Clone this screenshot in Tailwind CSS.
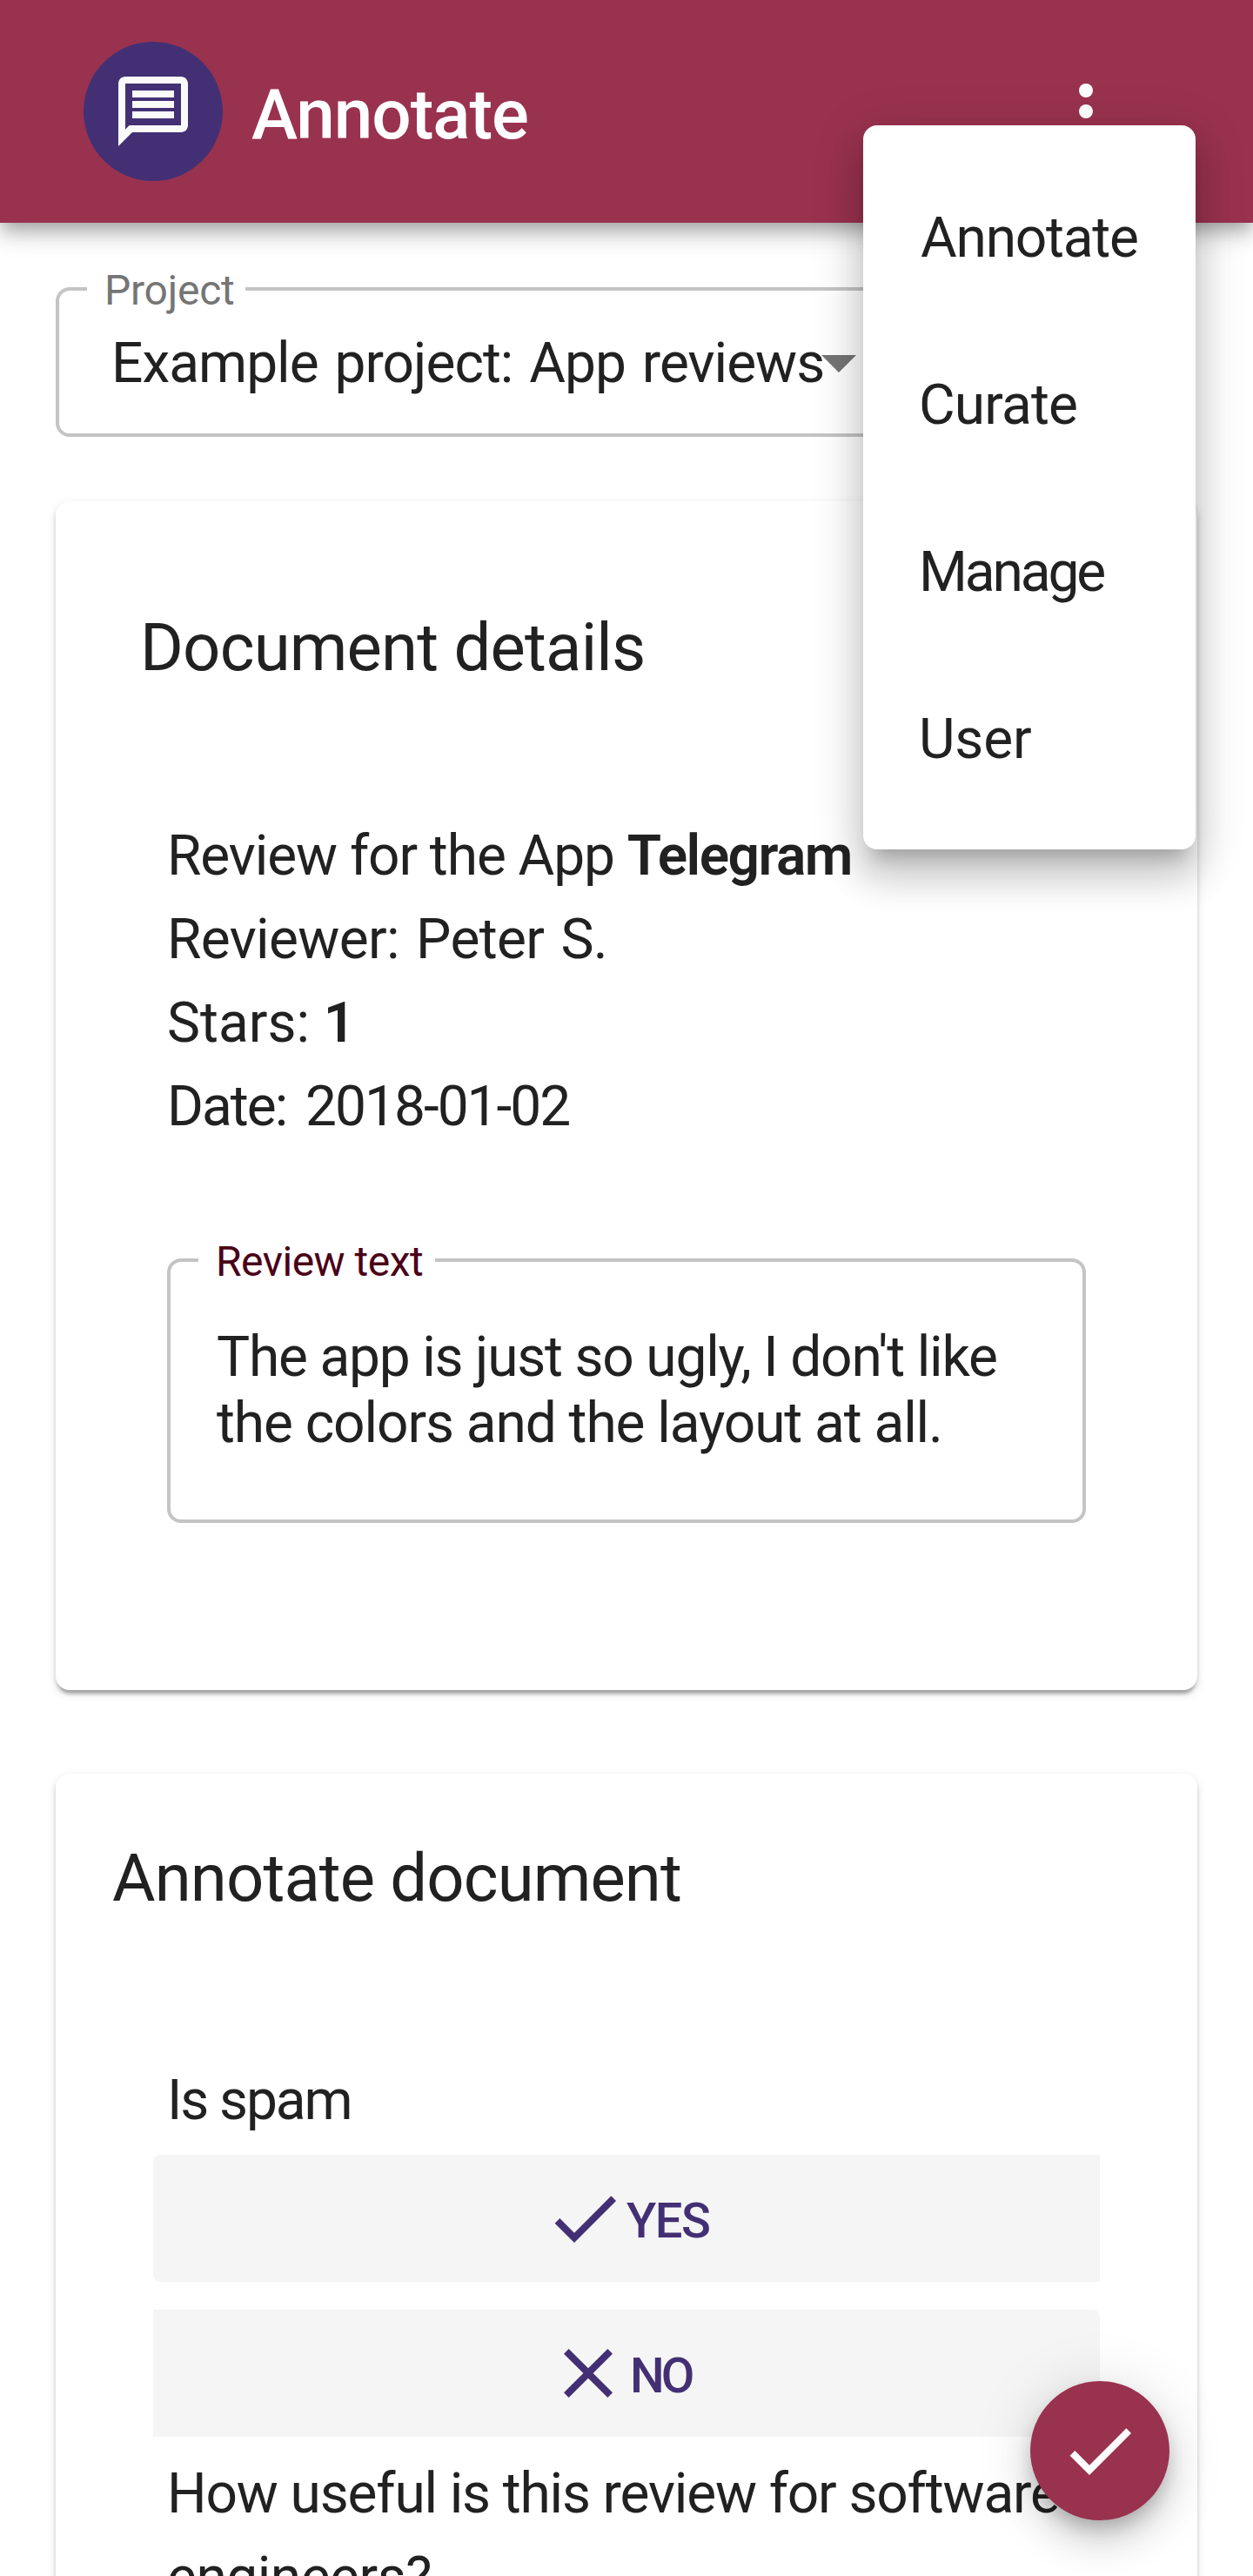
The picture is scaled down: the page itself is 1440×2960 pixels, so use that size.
<!DOCTYPE html>
<html lang="en">
<head>
<meta charset="utf-8">
<title>Annotate</title>
<script src="https://cdn.jsdelivr.net/npm/@tailwindcss/browser@4"></script>
</head>
<body class="bg-white font-[Roboto,sans-serif] text-[#212121]">
<div class="relative h-[2960px] w-[1440px] overflow-hidden text-[64px] leading-[96px]">

  <!-- App bar -->
  <header class="relative z-10 flex h-64 items-center bg-[#99324f] pr-36 pl-24 text-white shadow-[0_8px_16px_-4px_rgba(0,0,0,.2),0_16px_20px_0_rgba(0,0,0,.14),0_4px_40px_0_rgba(0,0,0,.12)]">
    <div class="flex size-40 items-center justify-center rounded-full bg-[#433074]">
      <svg class="size-24 fill-[#fafafa]" viewBox="0 0 24 24"><path d="M4 4h16v12H5.17L4 17.17V4m0-2c-1.1 0-1.99.9-1.99 2L2 22l4-4h14c1.1 0 2-.9 2-2V4c0-1.1-.9-2-2-2H4zm2 10h12v2H6v-2zm0-3h12v2H6V9zm0-3h12v2H6V6z"/></svg>
    </div>
    <h1 class="ml-[33px] pt-[7px] text-[80px] font-medium tracking-[-1.03px]">Annotate</h1>
    <svg class="ml-auto size-24 fill-white" viewBox="0 0 24 24"><circle cx="12" cy="6" r="2"/><circle cx="12" cy="12" r="2"/><circle cx="12" cy="18" r="2"/></svg>
  </header>

  <main class="px-16 pt-[74px]">
    <!-- Project select -->
    <div class="relative flex h-[172px] w-[980px] items-center rounded-2xl border-4 border-[#c4c4c4] pt-1 pr-6 pl-[60px]">
      <span class="absolute -top-7 left-8 w-[182px] bg-white pl-5 text-[48px] leading-[56px] tracking-[-0.25px] text-[#757575]">Project</span>
      <span class="whitespace-nowrap tracking-[-0.98px] [word-spacing:4px]">Example project: App reviews</span>
      <svg class="absolute top-[34px] left-[848px] size-24 fill-[#757575]" viewBox="0 0 24 24"><path d="M7 10l5 5 5-5z"/></svg>
    </div>

    <!-- Document details -->
    <section class="mt-[74px] h-[1366px] rounded-2xl bg-white px-32 pt-[120px] shadow-[0_8px_4px_-4px_rgba(0,0,0,.2),0_4px_4px_0_rgba(0,0,0,.14),0_4px_12px_0_rgba(0,0,0,.12)]">
      <h2 class="-ml-[31px] text-[76px] tracking-[-0.79px]">Document details</h2>
      <div class="mt-[144px] whitespace-nowrap">
        <p class="tracking-[-1.08px]">Review for the App <b class="font-semibold tracking-[-1.52px]">Telegram</b></p>
        <p class="tracking-[-0.65px] [word-spacing:4px]">Reviewer: Peter S.</p>
        <p>Stars: <b class="font-semibold">1</b></p>
        <p class="tracking-[-2px] [word-spacing:8px]">Date: 2018-01-02</p>
      </div>
      <div class="relative mt-[126px] h-[304px] rounded-2xl border-4 border-[#c4c4c4] pt-[72px] pl-[53px] leading-[76px] whitespace-nowrap">
        <span class="absolute -top-7 left-8 w-[272px] bg-white pl-5 text-[48px] leading-[56px] tracking-[-0.5px] text-[#4a0018]">Review text</span>
        <p class="tracking-[-1.2px]">The app is just so ugly, I don't like</p>
        <p class="tracking-[-1.08px]">the colors and the layout at all.</p>
      </div>
    </section>

    <!-- Annotation form -->
    <section class="mt-24 h-[1100px] rounded-2xl bg-white px-28 pt-[72px] shadow-[0_8px_4px_-4px_rgba(0,0,0,.2),0_4px_4px_0_rgba(0,0,0,.14),0_4px_12px_0_rgba(0,0,0,.12)]">
      <h2 class="-ml-[47px] text-[76px] tracking-[-0.87px]">Annotate document</h2>
      <p class="mt-[160px] ml-4 tracking-[-2.1px]">Is spam</p>
      <div class="mt-[14px] flex flex-col gap-8 text-[56px] font-medium text-[#433074]">
        <button class="flex h-[146px] items-center justify-center rounded-l-lg bg-[#f5f5f5]">
          <svg class="size-24 fill-current" viewBox="0 0 24 24"><path d="M9 16.17L4.83 12l-1.42 1.41L9 19 21 7l-1.41-1.41z"/></svg>
          <span class="w-24 pt-1.5 text-left tracking-[-1.4px]">YES</span>
        </button>
        <button class="flex h-[146px] items-center justify-center rounded-r-lg bg-[#f5f5f5]">
          <svg class="size-24 fill-current" viewBox="0 0 24 24"><path d="M19 6.41L17.59 5 12 10.59 6.41 5 5 6.41 10.59 12 5 17.59 6.41 19 12 13.41 17.59 19 19 17.59 13.41 12z"/></svg>
          <span class="w-[88px] pt-1.5 text-left tracking-[-4px]">NO</span>
        </button>
      </div>
      <p class="mt-[18px] ml-4 whitespace-nowrap tracking-[-1.15px]">How useful is this review for software<br><span class="tracking-[-0.5px]">engineers?</span></p>
    </section>
  </main>

  <!-- Overflow menu -->
  <ul class="absolute top-36 left-[992px] z-20 h-[832px] w-[382px] rounded-2xl bg-white px-16 py-[34px] leading-[192px] shadow-[0_20px_20px_-12px_rgba(0,0,0,.2),0_32px_40px_4px_rgba(0,0,0,.14),0_12px_56px_8px_rgba(0,0,0,.12)]">
    <li class="tracking-[-1.23px]"><span class="ml-0.5">Annotate</span></li>
    <li class="tracking-[-0.82px]">Curate</li>
    <li class="tracking-[-3.1px]">Manage</li>
    <li class="tracking-[-0.16px]">User</li>
  </ul>

  <!-- Save button -->
  <button class="absolute right-24 bottom-16 z-20 flex size-40 items-center justify-center rounded-full bg-[#99324f] shadow-[0_12px_20px_-4px_rgba(0,0,0,.2),0_24px_40px_0_rgba(0,0,0,.14),0_4px_72px_0_rgba(0,0,0,.12)]">
    <svg class="size-24 fill-white" viewBox="0 0 24 24"><path d="M9 16.17L4.83 12l-1.42 1.41L9 19 21 7l-1.41-1.41z"/></svg>
  </button>
</div>
</body>
</html>
